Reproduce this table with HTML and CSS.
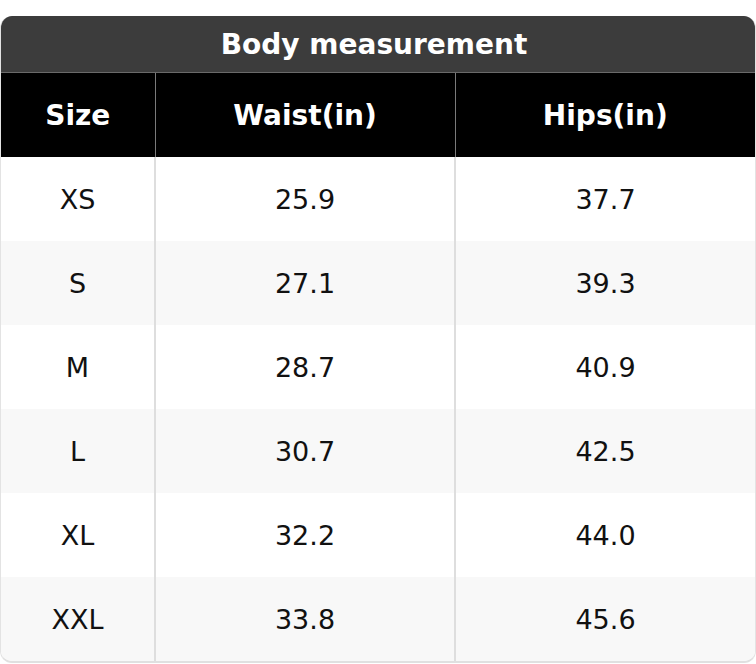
FILE: index.html
```html
<!DOCTYPE html>
<html>
<head>
<meta charset="utf-8">
<link rel="stylesheet" href="styles.css">
</head>
<body>
<div class="page">
  <div class="chart">
    <div class="title">Body measurement</div>
    <table class="sizes">
      <colgroup>
        <col class="c1"><col class="c2"><col class="c3">
      </colgroup>
      <thead>
        <tr><th>Size</th><th>Waist(in)</th><th>Hips(in)</th></tr>
      </thead>
      <tbody>
        <tr><td>XS</td><td>25.9</td><td>37.7</td></tr>
        <tr><td>S</td><td>27.1</td><td>39.3</td></tr>
        <tr><td>M</td><td>28.7</td><td>40.9</td></tr>
        <tr><td>L</td><td>30.7</td><td>42.5</td></tr>
        <tr><td>XL</td><td>32.2</td><td>44.0</td></tr>
        <tr><td>XXL</td><td>33.8</td><td>45.6</td></tr>
      </tbody>
    </table>
  </div>
</div>
</body>
</html>
```
FILE: styles.css
```css
html, body {
  margin: 0;
  padding: 0;
  background: #ffffff;
}
.page {
  padding-top: 16px;
  font-family: "DejaVu Sans", sans-serif;
}
.chart {
  width: 756px;
  box-sizing: border-box;
  border-radius: 12px;
  overflow: hidden;
  border: 1px solid #e3e3e3;
  border-top: 0;
  border-bottom: 2px solid #e0e0e0;
}
.title {
  height: 56px;
  margin: 0 -1px;
  padding-right: 8px;
  background: #3c3c3c;
  color: #ffffff;
  font-weight: bold;
  font-size: 28px;
  display: flex;
  align-items: center;
  justify-content: center;
  border-bottom: 1px solid #6a6a6a;
}
.sizes {
  width: 100%;
  border-collapse: collapse;
  table-layout: fixed;
}
.c1 { width: 154px; }
.c2 { width: 300px; }
.sizes th {
  height: 84px;
  padding: 0;
  background: #000000;
  color: #ffffff;
  font-weight: bold;
  font-size: 28px;
  text-align: center;
}
.sizes th + th {
  border-left: 1px solid #7a7a7a;
}
.sizes td {
  height: 84px;
  padding: 0;
  font-size: 27px;
  color: #111111;
  text-align: center;
}
.sizes td + td {
  border-left: 2px solid #dedede;
}
.sizes tbody tr:nth-child(even) td {
  background: #f8f8f8;
}
```
